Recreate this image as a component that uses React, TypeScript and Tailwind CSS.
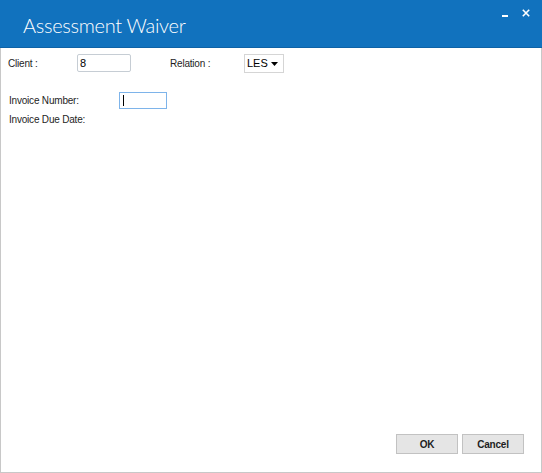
import React from "react";

export default function App() {
  const label = "text-[10px] leading-[13px] text-[#1e1e1e] tracking-[-0.2px]";
  return (
    <div
      className="w-[542px] h-[473px] flex flex-col bg-white"
      style={{ fontFamily: '"Liberation Sans", Arial, sans-serif' }}
    >
      <div className="h-[48px] shrink-0 bg-[#1172be] border-b border-[#0e62a6] flex items-start">
        <div
          className="pl-[23px] pt-[13px] text-[20px] leading-[24px] text-white font-light tracking-[-0.3px]"
          style={{ fontFamily: 'Lato, "Open Sans", sans-serif' }}
        >
          Assessment Waiver
        </div>
        <div className="flex-1" />
        <div className="w-[6px] h-[2px] bg-white mt-[15px] mr-[14px] shrink-0" />
        <svg width="8" height="8" viewBox="0 0 8 8" className="mt-[9px] mr-[12px] shrink-0">
          <path d="M0.8 0.8 L7.2 7.2 M7.2 0.8 L0.8 7.2" stroke="white" strokeWidth="1.6" />
        </svg>
      </div>
      <div className="flex-1 flex flex-col border-l border-r border-b border-[#c8c8c8]">
        <div className="flex items-center pt-[6px] h-[18px] box-content">
          <div className={`${label} w-[76px] pl-[7px]`}>Client :</div>
          <div className="w-[54px] h-[18px] border border-[#c6cdd4] rounded-[2px] flex items-center pl-[2px]">
            <span className="text-[11px] leading-[13px] text-black">8</span>
          </div>
          <div className={`${label} w-[74px] ml-[39px]`}>Relation :</div>
          <div className="w-[40px] h-[19px] border border-[#d5d5d5] flex items-center pl-[2px] pr-[5px]">
            <span className="text-[11px] leading-[13px] text-black">LES</span>
            <svg width="7" height="4" viewBox="0 0 7 4" className="ml-auto mt-[1px]">
              <path d="M0 0 L7 0 L3.5 4 Z" fill="black" />
            </svg>
          </div>
        </div>
        <div className="flex items-center mt-[20px] h-[17px]">
          <div className={`${label} w-[118px] pl-[8px]`}>Invoice Number:</div>
          <div className="w-[48px] h-[17px] border border-[#7eb4ea] flex items-center pl-[3px]">
            <div className="w-[1px] h-[11px] bg-black" />
          </div>
        </div>
        <div className={`${label} pl-[8px] mt-[4px]`}>Invoice Due Date:</div>
        <div className="mt-auto flex justify-end gap-[4px] pr-[17px] pb-[18px]">
          <button className="w-[62px] h-[20px] bg-[#e5e5e5] border border-[#c2c2c2] text-[10px] font-bold text-[#1e1e1e] leading-[13px] tracking-[-0.2px]">
            OK
          </button>
          <button className="w-[62px] h-[20px] bg-[#e5e5e5] border border-[#c2c2c2] text-[10px] font-bold text-[#1e1e1e] leading-[13px] tracking-[-0.2px]">
            Cancel
          </button>
        </div>
      </div>
    </div>
  );
}
